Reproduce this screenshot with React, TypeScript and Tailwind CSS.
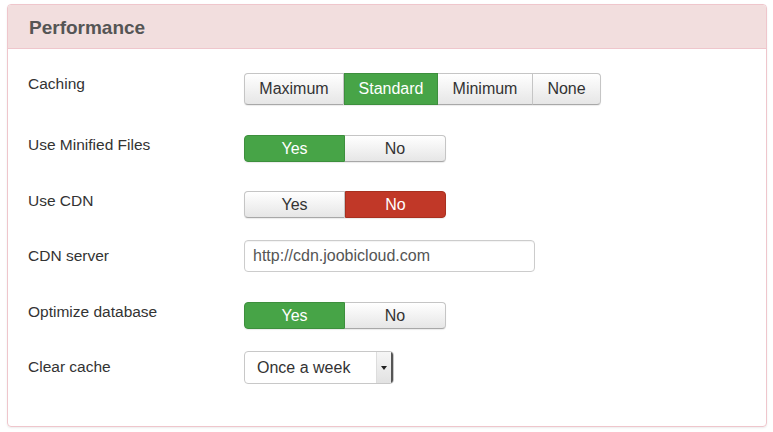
import React from "react";

const btn =
  "h-full flex items-center justify-center border border-[#c5c5c5] border-b-[#a8a8a8] bg-gradient-to-b from-white to-[#e6e6e6] text-[#333]";

const Toggle = ({ value }: { value: "yes-green" | "no-red" }) => {
  const yesOn = value === "yes-green";
  return (
    <div className="flex h-[27px] text-[16px] shadow-[0_1px_1px_rgba(0,0,0,0.08)] rounded">
      <div
        className={
          yesOn
            ? "w-[101px] h-full flex items-center justify-center rounded-l border border-[#3d8f3d] bg-[#47a447] text-white"
            : `w-[101px] rounded-l ${btn}`
        }
      >
        Yes
      </div>
      <div
        className={
          !yesOn
            ? "w-[101px] h-full flex items-center justify-center rounded-r border border-[#a8301f] bg-[#c13828] text-white"
            : `w-[101px] rounded-r border-l-0 ${btn}`
        }
      >
        No
      </div>
    </div>
  );
};

const Row = ({
  label,
  labelPad,
  mt,
  children,
}: {
  label: string;
  labelPad: string;
  mt: string;
  children: React.ReactNode;
}) => (
  <div className={`flex items-start ${mt}`}>
    <div className={`w-[216px] shrink-0 text-[15.5px] leading-5 text-[#333] ${labelPad}`}>{label}</div>
    <div>{children}</div>
  </div>
);

export default function App() {
  return (
    <div className="w-[773px] h-[432px] bg-white pt-[4px] pl-[7px] font-['Liberation_Sans',Arial,sans-serif]">
      <div className="w-[760px] h-[423px] border border-[#efc6cc] rounded-[4px] shadow-[0_1px_2px_rgba(0,0,0,0.08)] overflow-hidden">
        {/* Header */}
        <div className="h-[44px] bg-[#f2dede] border-b border-[#efc6cc] flex items-center pl-[21px] pt-[3px]">
          <h2 className="text-[19px] font-bold text-[#555]">Performance</h2>
        </div>

        {/* Body */}
        <div className="pl-[20px] pt-[24px]">
          <Row label="Caching" labelPad="pt-[1px]" mt="mt-0">
            <div className="flex h-[32px] text-[16px] rounded shadow-[0_1px_1px_rgba(0,0,0,0.08)]">
              <div className={`w-[100px] rounded-l ${btn}`}>Maximum</div>
              <div className="w-[94px] h-full flex items-center justify-center border border-[#3d8f3d] bg-[#47a447] text-white">
                Standard
              </div>
              <div className={`w-[95px] border-l-0 ${btn}`}>Minimum</div>
              <div className={`w-[68px] rounded-r border-l-0 ${btn}`}>None</div>
            </div>
          </Row>

          <Row label="Use Minified Files" labelPad="pt-0" mt="mt-[30px]">
            <div className="h-[26px] flex">
              <Toggle value="yes-green" />
            </div>
          </Row>

          <Row label="Use CDN" labelPad="pt-0" mt="mt-[30px]">
            <Toggle value="no-red" />
          </Row>

          <Row label="CDN server" labelPad="pt-[6px]" mt="mt-[22px]">
            <div className="w-[291px] h-[32px] border border-[#ccc] rounded-[4px] flex items-center pl-[8px] text-[16px] text-[#555] shadow-[inset_0_1px_1px_rgba(0,0,0,0.05)]">
              http://cdn.joobicloud.com
            </div>
          </Row>

          <Row label="Optimize database" labelPad="pt-0" mt="mt-[30px]">
            <Toggle value="yes-green" />
          </Row>

          <Row label="Clear cache" labelPad="pt-[6px]" mt="mt-[22px]">
            <div className="w-[150px] h-[33px] border border-[#c8c8c8] rounded-[4px] flex text-[16px] text-[#333] overflow-hidden">
              <div className="flex-1 flex items-center pl-[12px]">Once a week</div>
              <div className="w-[17px] h-full bg-gradient-to-b from-[#f6f6f6] to-[#e2e2e2] border-l border-[#ddd] border-r-[2px] border-r-[#555] flex items-center justify-center">
                <svg width="6" height="4" viewBox="0 0 6 4">
                  <path d="M0 0 L6 0 L3 4 Z" fill="#222" />
                </svg>
              </div>
            </div>
          </Row>
        </div>
      </div>
    </div>
  );
}
